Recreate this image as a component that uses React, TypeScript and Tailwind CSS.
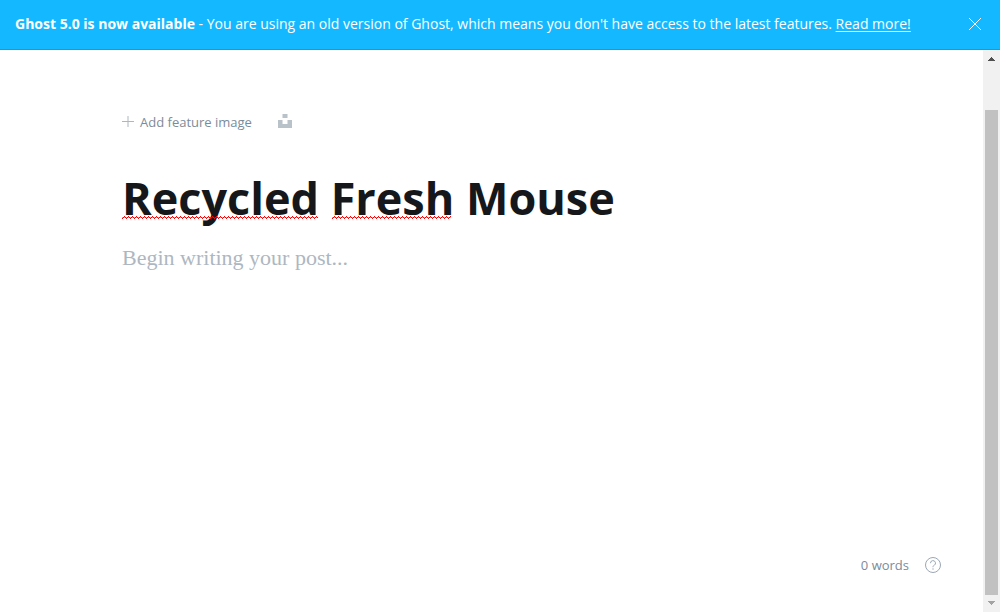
import { useState } from "react";

function Banner({ onClose }: { onClose: () => void }) {
  return (
    <aside className="flex h-[50px] shrink-0 items-center justify-between border-b border-[#0f9fe0] bg-[#14b8ff] pr-[18px] pb-px pl-[15px] text-[14px] leading-5 text-white">
      <p className="whitespace-nowrap">
        <strong className="font-bold">Ghost 5.0 is now available</strong> - You are using an old version of Ghost,
        which means you don't have access to the latest features.{" "}
        <a href="#read-more" className="underline underline-offset-2">
          Read more!
        </a>
      </p>
      <button type="button" aria-label="Close" onClick={onClose} className="flex shrink-0">
        <svg width="14" height="14" viewBox="0 0 14 14" fill="none" stroke="currentColor" aria-hidden="true">
          <path d="M1 1l12 12M13 1L1 13" />
        </svg>
      </button>
    </aside>
  );
}

function Squiggle({ id, width }: { id: string; width: number }) {
  return (
    <svg width={width} height="3" shapeRendering="crispEdges" aria-hidden="true">
      <defs>
        <pattern id={id} width="4" height="3" patternUnits="userSpaceOnUse">
          <path d="M0 2h1v1H0zM1 1h1v1H1zM2 0h1v1H2zM3 1h1v1H3z" fill="#f00" />
          <path d="M0 1h1v1H0zM2 1h1v1H2z" fill="#f00" fillOpacity=".4" />
        </pattern>
      </defs>
      <rect width={width} height="3" fill={`url(#${id})`} />
    </svg>
  );
}

function Scrollbar() {
  return (
    <div className="flex w-[17px] shrink-0 flex-col bg-[#f1f1f1]" aria-hidden="true">
      <svg width="17" height="17" viewBox="0 0 17 17" shapeRendering="crispEdges">
        <path d="M8 7h1v1h1v1h1v1h1v1H5v-1h1V9h1V8h1z" fill="#505050" />
      </svg>
      <div className="flex-[43]" />
      <div className="mx-[2px] flex-[485] bg-[#c1c1c1]" />
      <svg width="17" height="17" viewBox="0 0 17 17" shapeRendering="crispEdges">
        <path d="M5 6h7v1h-1v1h-1v1H9v1H8V9H7V8H6V7H5z" fill="#a3a3a3" />
      </svg>
    </div>
  );
}

export default function App() {
  const [open, setOpen] = useState(true);
  const [title, setTitle] = useState("Recycled Fresh Mouse");
  const [body, setBody] = useState("");
  const words = body.split(/\s+/).filter(Boolean).length;

  return (
    <div className="flex h-screen flex-col bg-white font-['Open_Sans','Noto_Sans',sans-serif]">
      {open && <Banner onClose={() => setOpen(false)} />}
      <div className="flex min-h-0 flex-1">
        <main className="flex min-w-0 flex-1 flex-col pt-[60px] pr-[42px] pb-[37px] pl-[122px]">
          <div className="flex items-center gap-[26px] text-[13px] leading-6 text-[#7c8b9a]">
            <button type="button" className="flex items-center gap-[6px]">
              <svg width="12" height="12" viewBox="0 0 12 12" stroke="#aeb7c1" aria-hidden="true">
                <path d="M6 0v11M0 5.5h12" />
              </svg>
              Add feature image
            </button>
            <button type="button" aria-label="Add image from Unsplash">
              <svg width="14" height="16" viewBox="0 0 14 16" fill="#b9c2c9" aria-hidden="true">
                <path d="M4.5 0h5v4h-5zM0 6h4.5v4h5V6H14v8H0z" />
              </svg>
            </button>
          </div>

          <div className="relative mt-8">
            <input
              aria-label="Post title"
              value={title}
              spellCheck={false}
              onChange={(e) => setTitle(e.target.value)}
              className="block h-[64px] w-full text-[45px] font-bold text-[#15171a] outline-none"
            />
            <div className="pointer-events-none absolute top-[50px] left-0 flex gap-[14px]">
              <Squiggle id="wave-a" width={196} />
              <Squiggle id="wave-b" width={119} />
            </div>
          </div>

          <textarea
            aria-label="Post content"
            placeholder="Begin writing your post..."
            value={body}
            onChange={(e) => setBody(e.target.value)}
            className="mt-3 block min-h-0 flex-1 resize-none font-['Liberation_Serif',serif] text-[22px] leading-8 text-[#15171a] outline-none placeholder:text-[#aeb7c1]"
          />

          <footer className="flex items-center justify-end gap-4 text-[13px] leading-5 text-[#7c8b9a]">
            <span>{words} words</span>
            <a href="#help" aria-label="Help">
              <svg width="16" height="16" viewBox="0 0 16 16" fill="none" stroke="#9ba7b4" aria-hidden="true">
                <circle cx="8" cy="8" r="7.5" />
                <path d="M5.5 6.2a2.5 2.5 0 1 1 3.7 2.1C8.3 8.8 8 9.2 8 10.2" />
                <circle cx="8" cy="12" r=".7" fill="#9ba7b4" stroke="none" />
              </svg>
            </a>
          </footer>
        </main>
        <Scrollbar />
      </div>
    </div>
  );
}
